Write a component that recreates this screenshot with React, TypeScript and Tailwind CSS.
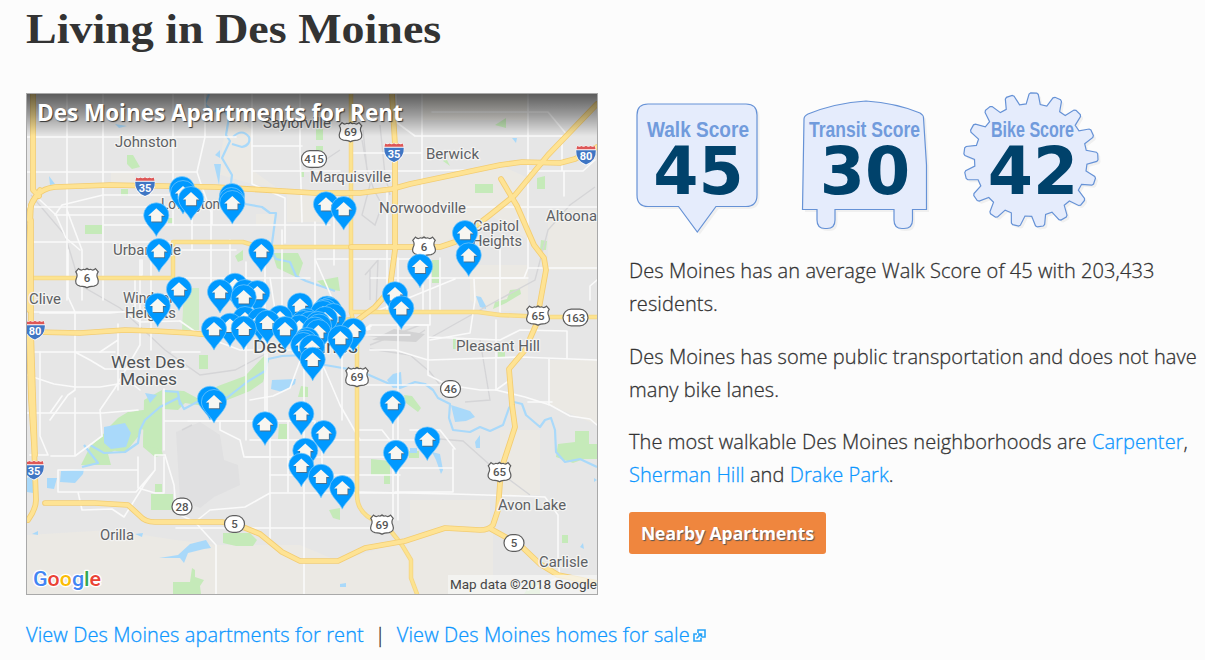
import React from "react";

type Pt = [number, number];

const pins: Pt[] = [
  [182, 176], [183, 180], [191, 186], [232, 183], [231.5, 187], [232.3, 190], [156.3, 202.3], [326, 191.3], [343.7, 196],
  [465, 220], [159, 238], [261.3, 238], [468.7, 242.3], [420, 253.6], [235, 272.7], [179, 276.3], [220, 279], [245, 279],
  [257.3, 280], [395, 281.2], [243.7, 284.2], [300, 292.4], [157.7, 292.7], [401.3, 295.3], [327, 295.5], [329, 297], [325, 298.5], [323, 300], [333.3, 303],
  [280, 305], [245, 306], [325, 306], [260, 307.3], [306.5, 308], [303.5, 310], [267.3, 309.7], [230, 312.7], [310, 311], [318, 311], [319, 313.5],
  [299.3, 314.4], [243.7, 315.6], [285, 316], [214, 316], [353.3, 317.7], [315, 316.5], [318.3, 319], [340.3, 325],
  [307, 327], [305, 329.5], [303.3, 332], [312, 334.3], [312.7, 346.7],
  [210, 385.7], [214, 389], [392.7, 390], [301.3, 401], [265, 411.3], [323.7, 420], [427.3, 426.4], [305.3, 437.7],
  [396, 439.8], [301.3, 452.7], [321, 463.7], [342.3, 475],
];

const minorRoads = [
  "M27 137H236", "M27 172H197L201 184L211 212V300M197 172L205 137M205 94V137", "M67 94V210L82 250V300M67 137V300", "M103 94V300", "M173 94V172V225",
  "M27 207H180L212 208V225H330M192 208V250M104 225H330M28 242H173", "M40 200L56 215L66 238L80 250", "M55 215L62 205L103 195H170", "M56 215H150",
  "M27 278H180M180 278H310M160 250H236M142 260V275L135 279V310M151 242V350", "M252 94V184L285 198V243", "M300 94V150L302 222M252 146H302M252 171H340",
  "M396 94V122L415 136H568L548 112H432", "M352 153H422V215M422 94V153M352 171H422", "M528 94V268M422 171L470 170M528 171H583L595 160M562 136V171M397 207H597M564 171V196",
  "M422 207V235M317 259H430V310M315 222V338M334 207V265M334 259H395", "M315 259L326 284L338 312M230 240V290M246 262V440M265 242V430M282 230V330",
  "M398 258V520M387 187V310M423 285V310M440 258V312M474 279L475 300L470 333L430 340M474 278H524L528 268H597M500 242V312",
  "M410 325H428V375L448 385L480 390H496V320M410 335H330M370 350L395 350L428 360L520 357L597 360M428 337L500 340L520 330L567 331V358M549 359V405",
  "M496 390L510 380M496 390L525 397L550 405L570 416L590 419L597 425", "M552 402H528M590 300V286L597 280", "M27 312H125L140 322L180 321M40 313H110L140 310M27 352H115M50 420L68 395L75 390V312L68 297V250",
  "M27 375L54 384L75 387H100L130 382L140 390", "M75 352L90 360L105 369H188M118 324V390M100 352L118 340M140 260V345L115 388L100 410L102 436",
  "M27 413H103L138 410M40 352V436L48 455H30M75 398V455M50 413L62 396", "M164 389V450M164 421H220V430L240 440L244 457H270M164 421H300",
  "M51 456H75L102 436M58 470H138M58 470V492H136L155 470V455H165M78 492L82 510L112 509L124 517L144 485L155 470M138 457V488L155 493H164V457",
  "M165 455L174 485L176 510M176 513L195 522L216 545V594M195 522L210 510L245 507L270 493H398V475M176 528L310 528M270 430V543M304 355V594M210 528H370",
  "M246 457H400M270 475H400M288 421V492M322 350V480M342 330V420M356 380V500M250 440H430M357 385H444V396M357 430H382L400 453M393 410V520M393 468H453V492H395M357 492L453 494L520 496L545 497L558 515V560L560 577L528 590M410 430H440L455 449M453 449V468",
  "M188 421H315V455M180 321L200 335L240 350H300M172 352L200 352M250 400L273 396L290 388L304 350M315 350L325 370L340 405L360 440", "M270 278L275 310L267 340V420",
  "M430 312V325H370L355 337M379 310L455 279M371 278H528M340 350L371 326M330 342L370 329",
];

const highways = [
  "M33 94L33 190L39 196M31 220V330L35 455M40 190L31 205L29 245V310",
  "M29 220Q29 190 55 187L110 185L215 187L315 193L360 193L392 189L410 184L500 165L522 162L560 163L575 159L597 147",
  "M392 94L395 145L395 250L391 280L390 290L375 307L355 322H350",
  "M597 104L548 155L515 195L490 215L455 242L440 247H351",
  "M501 179L517 206L534 245L544 258L546 270L536 325L525 350L509 369L512 405L515 427L501 470L498 510L493 525Q489 530 480 530L445 528L405 541L365 548L338 561H300L282 552L260 534L238 525L222 522H155Q145 522 140 516L128 505L95 503H45",
  "M29 330V340L31 400L34 445L36 500Q36 509 28 520",
  "M34 332L80 333L125 330L155 331L190 333L210 335L270 328L350 320",
  "M491 529L520 545L540 564L558 575L597 583",
];

const arterials = [
  "M351 94V312L357 335V495Q357 508 367 516L390 530L402 545L411 560V578L417 594",
  "M351 312H360H478L500 315L545 317H597",
  "M29 278H173V242H243L260 247H440",
];

function Road({ d, w, c, e }: { d: string[]; w: number; c: string; e?: string }) {
  return (
    <g fill="none" strokeLinejoin="round" strokeLinecap="round">
      {e && d.map((p, i) => <path key={"e" + i} d={p} stroke={e} strokeWidth={w + 1.7} />)}
      {d.map((p, i) => <path key={i} d={p} stroke={c} strokeWidth={w} />)}
    </g>
  );
}

function Pin({ x, y }: { x: number; y: number }) {
  return (
    <g transform={`translate(${x} ${y + 0.5})`}>
      <path
        d="M0 33.6C-2.5 27-12.6 20.5-12.6 12.4A12.6 12.4 0 0 1 12.6 12.4C12.6 20.5 2.5 27 0 33.6Z"
        fill="#0099ff" stroke="#7ac8fb" strokeWidth=".7"
      />
      <path d="M.6 6.3L9 14H6V19.8H-4.7V14H-7.4Z" fill="#46708f" />
      <path d="M0 5.4L8.2 12.9H5.2V18.8H-5.2V12.9H-8.2Z" fill="#f7f6f1" />
    </g>
  );
}

function Label({ x, y, t, s = 14, w, c = "#5d6064" }: { x: number; y: number; t: string; s?: number; w: number; c?: string }) {
  return (
    <text
      x={x} y={y} fontSize={s} textLength={w} lengthAdjust="spacingAndGlyphs" fill={c}
      stroke="#f4f4f2" strokeWidth="2.4" strokeLinejoin="round" paintOrder="stroke"
    >
      {t}
    </text>
  );
}

function Interstate({ x, y, n }: { x: number; y: number; n: string }) {
  return (
    <g transform={`translate(${x} ${y})`}>
      <path d="M-9-9.5Q-7-8-5-9.5Q-2.5-8 0-9.8Q2.5-8 5-9.5Q7-8 9-9.5L10.3-5Q11 6 0 10.5Q-11 6-10.3-5Z" fill="#fff" />
      <path d="M-8.8-9Q-6.5-7.5-4.6-9Q-2.4-7.5 0-9.2Q2.4-7.5 4.6-9Q6.5-7.5 8.8-9L9.6-5.8H-9.6Z" fill="#dd5757" />
      <path d="M-9.8-4.7H9.8Q10.5 5.5 0 9.6Q-10.5 5.5-9.8-4.7Z" fill="#3f76c4" />
      <text y="5" textAnchor="middle" fontSize="11" fontWeight="700" fill="#fff">{n}</text>
    </g>
  );
}

function UsRoute({ x, y, n }: { x: number; y: number; n: string }) {
  return (
    <g transform={`translate(${x} ${y})`}>
      <path
        d="M-8.5-9.3Q-6.2-7-3.5-8.7Q-1.4-8 0-9.5Q1.4-8 3.5-8.7Q6.2-7 8.5-9.3L11.2-6.2Q8.8-3 10.8.7Q13 6.6 7 8.2Q2 8.3 0 9.8Q-2 8.3-7 8.2Q-13 6.6-10.8.7Q-8.8-3-11.2-6.2Z"
        fill="#fff" stroke="#5e5e5e" strokeWidth="1.2"
      />
      <text y="4.2" textAnchor="middle" fontSize="11.5" fontWeight="500" fill="#555">{n}</text>
    </g>
  );
}

function StateRoute({ x, y, n, w = 20 }: { x: number; y: number; n: string; w?: number }) {
  return (
    <g transform={`translate(${x} ${y})`}>
      <rect x={-w / 2} y="-8.3" width={w} height="16.6" rx="8.3" fill="#fff" stroke="#5e5e5e" strokeWidth="1.2" />
      <text y="4.1" textAnchor="middle" fontSize="11.5" fontWeight="500" fill="#555">{n}</text>
    </g>
  );
}

function CityMap() {
  return (
    <svg className="block h-full w-full font-['Roboto',sans-serif] font-normal tracking-normal [-webkit-text-stroke:0]" viewBox="27 94 570 500">
      <defs>
        <linearGradient id="shade" x1="0" y1="0" x2="0" y2="1">
          <stop offset="0" stopColor="#000" stopOpacity=".6" />
          <stop offset=".5" stopColor="#000" stopOpacity=".32" />
          <stop offset="1" stopColor="#000" stopOpacity="0" />
        </linearGradient>
      </defs>
      <rect x="27" y="94" width="570" height="500" fill="#e6e6e6" />
      <g fill="#ebe9e4">
        <path d="M228 110L252 130V170L287 195V222H330L315 193L252 184L218 174Z" />
        <path d="M397 187L500 165L528 178V240L490 215L440 245H397Z" />
        <path d="M470 265H528V310L490 312L470 300ZM550 360H597V425L550 405ZM111 172H135V187H111Z" />
        <path d="M27 535L110 530L176 540L216 545H300L338 561L405 541L445 528H493V594H27ZM410 500H490V530H410ZM500 430H540V495H500Z" />
        <path d="M548 210H597V270H548ZM256 214H275V226H256ZM422 94H528V120H422Z" />
      </g>
      <path d="M176 432L200 422L220 435L224 460L238 465L240 485L214 497L200 508L180 500Z" fill="#e0e0e1" />
      <g fill="#c5eab9">
        <path d="M127 155H133L140 167L132 169L127 164ZM85 225H102V234H85ZM121 189H128V196H121ZM168 218H173V223H168Z" />
        <path d="M316 122H323V140H316ZM316 146H323V151H316ZM300 172H304V177H300Z" />
        <path d="M475 184H493V193H475ZM495 125L506 118V128ZM537 178L545 176V189H537ZM541 240L547 241L546 250H540ZM446 158L450 166L443 161Z" />
        <path d="M272 253H298L303 263L298 278L277 268ZM235 256L243 250V260L238 262Z" />
        <path d="M317 281L338 277L340 291L326 289ZM432 260H439V283H432ZM493 309L495 302L507 299L510 290L520 289L521 294L506 303ZM498 352H505V358H498ZM453 338H456V349H453Z" />
        <path d="M184 288H199V330H182ZM200 355H208V369H200Z" fill="#cfebc6" />
        <path d="M199 355H208V369H199ZM165 390L184 391L197 398L218 386L245 376L264 356L269 360L263 382L250 391L235 397L210 407L185 403L178 410L164 409ZM301 386L308 387V397H298Z" />
        <path d="M143 410L162 411L155 424L163 455L155 457L143 447L144 430L131 425L127 444L108 454L111 465H81L90 447L98 439L115 423L130 412Z" />
        <path d="M106 430L118 418L128 412L143 412L141 433L125 453L103 448Z" />
        <path d="M151 494H173V510H151ZM155 484H162V492H155ZM223 533H250L257 540L253 546L236 546L223 543Z" />
        <path d="M192 568L195 570V577L201 579L204 580L200 586L201 594H173V582H190Z" />
        <path d="M371 459L390 461V484H384V475H371ZM409 451H419V458H409ZM404 395L412 396L421 408L418 412L406 403ZM279 424H287V439H278Z" />
        <path d="M575 431H589V444H597V459L584 459L573 463L556 457L558 444L575 442ZM562 535H568V543H562ZM532 582H540V594H524ZM329 510L340 508V520L333 518Z" />
        <path d="M144 400L162 390V450L143 445Z" />
      </g>
      <g fill="none" stroke="#a9d9fa" strokeWidth="2.2" strokeLinejoin="round">
        <path d="M209 94L205 104L213 112L222 108L229 117L226 135L230 141L222 158L232 175L231 183M233 137Q242 128 249 137Q251 145 242 147L232 144" />
        <path d="M245 204L262 207L270 213H276L273 236L271 250L276 259L290 262L296 276L306 281L335 291" />
        <path d="M82 467L98 463L84 445M90 445L104 453L125 452L138 443L140 430L145 420L160 407L178 398L184 409L197 402L215 405L228 397L247 382L265 371L268 359L282 356L306 355L325 365L360 371L385 382L400 388L415 382L425 384L433 390L438 398L450 404L449 418L453 430L470 432L480 427L490 431L503 425L509 408L514 402L522 404L526 415L540 427L545 420L551 418L555 430L556 452L565 462L580 459L597 467" />
        <path d="M164 391L178 392L180 405M310 310L297 302" />
      </g>
      <g fill="#a9d9fa">
        <path d="M214 164H221L219 185ZM215 155L220 150V158ZM49 176L55 184L50 185ZM512 138H517L516 143ZM476 296L481 297L486 306V309L480 307Z" />
        <path d="M387 380L393 374L401 372L402 387L393 388ZM451 405L470 411L475 417L466 421L455 422ZM475 442L480 435V448H476Z" />
        <path d="M145 393L157 395L150 403ZM272 380L296 379L295 384L282 392L271 389ZM104 427L125 423L131 433L126 447L111 449L104 443Z" />
        <path d="M47 478H57L54 489L47 488ZM61 471L84 469L83 474L75 483L60 482ZM27 478L33 475V493L27 492Z" />
        <path d="M159 558L178 555L190 544L206 540L211 548L204 549L188 553L184 563L180 558ZM32 534L38 531V535ZM135 534L143 533L142 537ZM340 584L346 583V587H340ZM432 452L440 454L443 470L441 474L436 460ZM410 448H417V453H410ZM580 547L583 543L584 549ZM115 124L127 126L119 128Z" />
        <path d="M597 480L594 478V482Z" />
      </g>
      <g fill="none" stroke="#d5d5d7" strokeWidth="1.4">
        <path d="M31 195L65 235L80 285L120 308L165 350L200 375L235 370L273 350" />
        <path d="M362 140L370 185L362 215L375 225L382 205L374 190L367 170L363 130M380 125L385 175L390 195" />
        <path d="M595 187L570 205L548 230L535 280L480 310L430 338M370 349L410 355L430 372L440 385" />
        <path d="M365 335L410 340L425 330M370 345L420 325M440 439L463 441L490 465L530 495M480 340L490 400L465 402" />
        <path d="M365 275L378 260L376 310M370 270V300M182 430L192 425M310 170L340 150" />
      </g>
      <path d="M372 340L394 329L425 334L416 342Z" fill="#d3d3d4" />
      <Road d={minorRoads} w={1.6} c="#fafafa" />
      <Road d={arterials} w={2.8} c="#fce38f" e="#f5d583" />
      <Road d={highways} w={4} c="#fee394" e="#f3cd72" />

      <Label x={263} y={127.5} t="Saylorville" w={68} />
      <Label x={115} y={147} t="Johnston" w={62} />
      <Label x={426} y={159} t="Berwick" w={53} />
      <Label x={310} y={182} t="Marquisville" w={81} />
      <Label x={161} y={208.5} t="Lovington" w={59} />
      <Label x={379} y={213} t="Norwoodville" w={87} />
      <Label x={546} y={220.5} t="Altoona" w={51} />
      <Label x={473} y={230.5} t="Capitol" w={46} />
      <Label x={472} y={245.5} t="Heights" w={50} />
      <Label x={113} y={254.5} t="Urbandale" w={68} />
      <Label x={29} y={304} t="Clive" w={32} />
      <Label x={123} y={302.5} t="Windsor" w={51} />
      <Label x={125} y={318} t="Heights" w={51} />
      <Label x={253} y={353} t="Des Moines" s={18.5} w={105} c="#4b4f53" />
      <Label x={111} y={367.5} t="West Des" s={16.5} w={74} c="#4f5357" />
      <Label x={120} y={385} t="Moines" s={16.5} w={57} c="#4f5357" />
      <Label x={456} y={350.5} t="Pleasant Hill" w={84} />
      <Label x={498} y={509.5} t="Avon Lake" w={68} />
      <Label x={100} y={539.5} t="Orilla" w={34} />
      <Label x={539} y={567} t="Carlisle" w={49} />

      <Interstate x={145} y={186.5} n="35" />
      <Interstate x={394} y={152.5} n="35" />
      <Interstate x={586} y={155} n="80" />
      <Interstate x={35} y={330} n="80" />
      <Interstate x={34} y={470} n="35" />
      <UsRoute x={350.5} y={132} n="69" />
      <UsRoute x={424} y={246.5} n="6" />
      <UsRoute x={87} y={278} n="6" />
      <UsRoute x={538} y={315.5} n="65" />
      <UsRoute x={357} y={377} n="69" />
      <UsRoute x={499.5} y={472} n="65" />
      <UsRoute x={382} y={524.5} n="69" />
      <StateRoute x={314} y={159} n="415" w={25} />
      <StateRoute x={575.5} y={317.5} n="163" w={25} />
      <StateRoute x={450.5} y={389} n="46" />
      <StateRoute x={182} y={506.5} n="28" />
      <StateRoute x={234.5} y={524} n="5" />
      <StateRoute x={514} y={543} n="5" />

      {pins.map(([x, y], i) => <Pin key={i} x={x} y={y} />)}

      <text x="33" y="585.5" fontSize="20.5" fontWeight="500" textLength="68" lengthAdjust="spacingAndGlyphs" stroke="#fff" strokeWidth="2.5" paintOrder="stroke" strokeLinejoin="round">
        <tspan fill="#4285f4">G</tspan><tspan fill="#ea4335">o</tspan><tspan fill="#fbbc05">o</tspan><tspan fill="#4285f4">g</tspan><tspan fill="#34a853">l</tspan><tspan fill="#ea4335">e</tspan>
      </text>
      <rect x="448" y="575" width="149" height="19" fill="#f6f6f4" fillOpacity=".75" />
      <text x="450" y="589" fontSize="13.5" textLength="147" lengthAdjust="spacingAndGlyphs" fill="#454545">Map data ©2018 Google</text>
      <rect x="27" y="94" width="570" height="42" fill="url(#shade)" />
    </svg>
  );
}

function BadgeText({ cx, label, w, n }: { cx: number; label: string; w: number; n: string }) {
  return (
    <>
      <text
        x={cx - w / 2} y="137" fontSize="22.5" fontWeight="700" textLength={w} lengthAdjust="spacingAndGlyphs" fill="#719bdc"
        className="font-['Liberation_Sans',sans-serif]"
      >
        {label}
      </text>
      <text x={cx + 0.5} y="193.5" fontSize="65" fontWeight="700" textAnchor="middle" fill="#00426b" className="font-['DejaVu_Sans',sans-serif]">{n}</text>
    </>
  );
}

const teeth = 17;
const gear = (() => {
  const cx = 1030.8, cy = 160;
  const out: string[] = [];
  for (let i = 0; i < teeth; i++) {
    const c = ((i / teeth) * 360 + 2.5) * (Math.PI / 180);
    const pts: [number, number][] = [[-0.125, 56.3], [-0.07, 66], [-0.045, 67.2], [0.045, 67.2], [0.07, 66], [0.125, 56.3]];
    for (const [a, r] of pts) out.push(`${(cx + r * Math.sin(c + a)).toFixed(2)} ${(cy - r * Math.cos(c + a)).toFixed(2)}`);
  }
  return "M" + out.join("L") + "Z";
})();

function Scores() {
  const shapes = [
    "M648 104H746Q757 104 757 115V195Q757 206.500 746 206.500H716L697.300 232L678.500 206.500H648Q637 206.500 637 195V115Q637 104 648 104Z",
    "M802.500 209.500L804 119Q804 116 808 114Q835 103 866 101Q896 103 920 113Q923.500 115 923.500 118L926.500 165V209.500H912.500V220Q912.500 228.500 904 228.500H902Q894 228.500 894 220V209.500H835V220Q835 228.500 827 228.500H825Q817 228.500 817 220V209.500Z",
    gear,
  ];
  return (
    <svg className="block h-[150px] w-[480px] tracking-normal [-webkit-text-stroke:0]" viewBox="629 90 480 150">
      {shapes.map((d, i) => (
        <g key={i}>
          <path d={d} transform="translate(2.500 2.500)" fill="#f0f0f0" />
          <path d={d} fill="#e5ecfc" stroke="#6692d6" strokeWidth="1.2" />
        </g>
      ))}
      <BadgeText cx={698} label="Walk Score" w={102} n="45" />
      <BadgeText cx={864.500} label="Transit Score" w={111} n="30" />
      <BadgeText cx={1032.500} label="Bike Score" w={83} n="42" />
    </svg>
  );
}

export default function App() {
  return (
    <main className="h-[660px] w-[1205px] overflow-hidden bg-[#fcfcfc] pl-[26px] font-['Open_Sans','Noto_Sans',sans-serif] text-[20px] font-light text-[#333]">
      <h1 className="h-[93px] w-max origin-left scale-x-[1.095] whitespace-nowrap pt-[3px] font-['Liberation_Serif',serif] text-[42px] leading-[52px] font-bold">Living in Des Moines</h1>
      <div className="flex">
        <section className="relative h-[502px] w-[572px] shrink-0 border border-[#a9a9a9]">
          <CityMap />
          <h2 className="absolute left-[10px] top-[3px] whitespace-nowrap text-[22.5px] leading-[32px] font-bold text-white [text-shadow:1px_1px_1px_#333]">Des Moines Apartments for Rent</h2>
        </section>
        <section className="ml-[31px] w-[576px]">
          <div className="-mt-[3px] h-[164px]"><Scores /></div>
          <div className="tracking-[0.08px] whitespace-nowrap [-webkit-text-stroke:0.3px]">
            <p className="mb-5 leading-[33px]">Des Moines has an average Walk Score of 45 with 203,433<br />residents.</p>
            <p className="mb-[19px] leading-[33px]">Des Moines has some public transportation and does not have<br />many bike lanes.</p>
            <p className="leading-[33px]">
              The most walkable Des Moines neighborhoods are <a className="text-[#0d97ff]">Carpenter</a>,<br />
              <a className="text-[#0d97ff]">Sherman Hill</a> and <a className="text-[#0d97ff]">Drake Park</a>.
            </p>
          </div>
          <button className="mt-[21px] block h-[42px] w-[197px] rounded-[3px] bg-[#ef863e] text-[17.5px] font-bold whitespace-nowrap text-white [text-shadow:1px_1px_1px_#555]">Nearby Apartments</button>
        </section>
      </div>
      <nav className="mt-[23px] flex items-center leading-[33px] tracking-[0.1px] whitespace-nowrap [-webkit-text-stroke:0.3px]">
        <a className="text-[#0d97ff]">View Des Moines apartments for rent</a>
        <span className="mx-[11px]">|</span>
        <a className="text-[#0d97ff]">View Des Moines homes for sale</a>
        <svg className="ml-[3px] mt-0.5 h-[13px] w-[13px]" viewBox="0 0 13 13" fill="none" stroke="#28a4f8" strokeWidth="1.6">
          <path d="M4 5H1V12H8V9M5 4V1H12V8H9M3.500 9.500L8.500 4.500M5 5H8.500V8.500" />
        </svg>
      </nav>
    </main>
  );
}
